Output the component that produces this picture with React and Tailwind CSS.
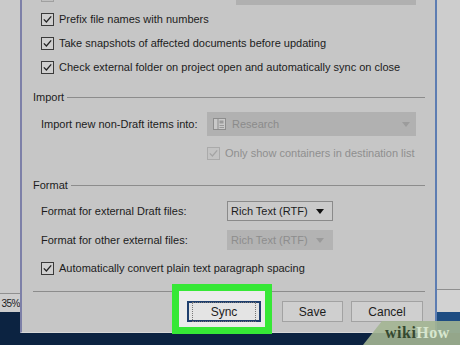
import React from 'react';

const Check = ({ disabled }) => (
  <span className={`w-[13px] h-[13px] border flex items-center justify-center shrink-0 ${disabled ? 'border-[#aaaaaa] bg-[#c3c3c3]' : 'border-[#3a3a3a] bg-[#cfcfcf]'}`}>
    <svg width="11" height="11" viewBox="0 0 11 11">
      <path d="M1.8 5.4 L4.4 8 L9.2 2.4" fill="none" stroke={disabled ? '#a4a4a4' : '#222'} strokeWidth="1.3" />
    </svg>
  </span>
);

const Arrow = ({ color }) => (
  <svg width="8" height="5" viewBox="0 0 8 5"><path d="M0 0 H8 L4 5 Z" fill={color} /></svg>
);

const GroupHead = ({ label }) => (
  <div className="flex items-center h-4 gap-[3px]">
    <span>{label}</span>
    <div className="flex-1 h-px bg-[#8c8c8c]" />
  </div>
);

const CheckRow = ({ children, className = '' }) => (
  <div className={`flex items-center gap-[5px] pl-2 ${className}`}>
    <Check />
    <span>{children}</span>
  </div>
);

export default function App() {
  return (
    <div className="w-[460px] h-[345px] relative overflow-hidden flex flex-col bg-[#0c2341] font-['Liberation_Sans',Arial,sans-serif] text-[11px] text-[#1c1c1c]">
      <div className="flex h-[333px]">
        {/* left desktop strip */}
        <div className="w-[20px] flex flex-col">
          <div className="flex-1 bg-[#cacaca]" />
          <div className="h-[19px] bg-[#cdcdcd] border-t border-[#8f8f8f] flex items-center justify-end text-[10px] tracking-[-0.5px] whitespace-nowrap">35%</div>
          <div className="h-[21px] bg-[#0c2341]" />
        </div>

        {/* dialog */}
        <div className="w-[417px] bg-[#c6c6c6] border-l-2 border-l-[#7d80a8] border-r-2 border-r-[#5d7db2] border-b border-b-[#d8d8d8] flex flex-col pl-[11px] pr-[10px]">
          <div className="flex items-center h-[22px] mt-[-16px] pl-2">
            <span className="w-[13px] h-[13px] border border-[#a0a0a0] bg-[#c0c0c0]" />
            <div className="ml-[182px] w-[180px] h-[20px] bg-[#b0b0b0]" />
          </div>

          <CheckRow className="h-6 mt-[1px]">Prefix file names with numbers</CheckRow>
          <CheckRow className="h-6">Take snapshots of affected documents before updating</CheckRow>
          <CheckRow className="h-6">Check external folder on project open and automatically sync on close</CheckRow>

          <div className="mt-[10px]"><GroupHead label="Import" /></div>

          <div className="flex items-center h-6 mt-[7px] pl-2">
            <span className="w-[166px]">Import new non-Draft items into:</span>
            <div className="w-[209px] h-6 bg-[#b1b1b1] flex items-center pl-[6px] pr-[6px] text-[#8b8b8b]">
              <svg width="13" height="12" viewBox="0 0 13 12" className="mr-[6px]">
                <rect x="0.5" y="0.5" width="12" height="11" fill="#c9c9c9" stroke="#8d8d8d" />
                <line x1="5" y1="1" x2="5" y2="11" stroke="#8d8d8d" />
                <rect x="6.5" y="2.5" width="4" height="3" fill="#9a9a9a" />
                <line x1="6.5" y1="7.5" x2="11" y2="7.5" stroke="#9a9a9a" />
                <line x1="6.5" y1="9.5" x2="11" y2="9.5" stroke="#9a9a9a" />
              </svg>
              <span className="flex-1">Research</span>
              <Arrow color="#9c9c9c" />
            </div>
          </div>

          <div className="flex items-center gap-[5px] h-4 mt-[9px] pl-[174px] text-[#8f8f8f]">
            <Check disabled />
            <span>Only show containers in destination list</span>
          </div>

          <div className="mt-4"><GroupHead label="Format" /></div>

          <div className="flex items-center h-5 mt-2 pl-2">
            <span className="w-[186px]">Format for external Draft files:</span>
            <div className="w-[106px] h-5 bg-[#cacaca] border border-[#8a8a8a] flex items-center pl-[3px] pr-[8px]">
              <span className="flex-1">Rich Text (RTF)</span>
              <Arrow color="#111" />
            </div>
          </div>

          <div className="flex items-center h-5 mt-[9px] pl-2">
            <span className="w-[186px]">Format for other external files:</span>
            <div className="w-[106px] h-5 bg-[#b3b3b3] flex items-center pl-[4px] pr-[9px] text-[#8d8d8d]">
              <span className="flex-1">Rich Text (RTF)</span>
              <Arrow color="#9a9a9a" />
            </div>
          </div>

          <CheckRow className="h-4 mt-[10px]">Automatically convert plain text paragraph spacing</CheckRow>

          <div className="mt-[15px] h-px bg-[#8c8c8c]" />

          <div className="flex justify-end items-center mt-[9px] pr-[2px] text-[12px]">
            <div className="relative">
              <div className="absolute left-[-15px] top-[-17px] w-[100px] h-[50px] border-[7px] border-[#36e836] bg-[#ebebeb] z-10" />
              <button className="relative z-20 w-[74px] h-[21px] bg-[#e4e4e4] border-2 border-[#1f3f6e] flex items-center justify-center">
                <span className="px-[18px] border border-dotted border-[#777]">Sync</span>
              </button>
            </div>
            <button className="ml-[21px] w-[61px] h-[21px] bg-[#cfcfcf] border border-[#a2a2a2] flex items-center justify-center">Save</button>
            <button className="ml-2 w-[72px] h-[21px] bg-[#cfcfcf] border border-[#a2a2a2] flex items-center justify-center">Cancel</button>
          </div>
        </div>

        {/* right desktop strip */}
        <div className="flex-1 flex flex-col">
          <div className="flex-1 bg-[#cdcdcd]" />
          <div className="h-[23px] bg-[#d2d2d2] border-t border-[#8f8f8f]" />
          <div className="h-[21px] bg-[#1d4c82]" />
        </div>
      </div>
      <div className="flex-1 bg-[#0c2341]" />

      {/* wikiHow watermark */}
      <div className="absolute right-0 bottom-0 w-[97px] h-[24px] z-30">
        <svg width="97" height="24" viewBox="0 0 97 24" className="absolute inset-0">
          <polygon points="0,24 19,0 97,0 97,24" fill="#a3b592" opacity="0.9" />
        </svg>
        <span className="absolute left-[22px] top-[3px] font-['Liberation_Serif',serif] font-bold text-[16px] leading-[18px] tracking-[0.5px]">
          <span className="text-[#34482f]">wiki</span><span className="text-[#d7e6cf]">How</span>
        </span>
      </div>
    </div>
  );
}
